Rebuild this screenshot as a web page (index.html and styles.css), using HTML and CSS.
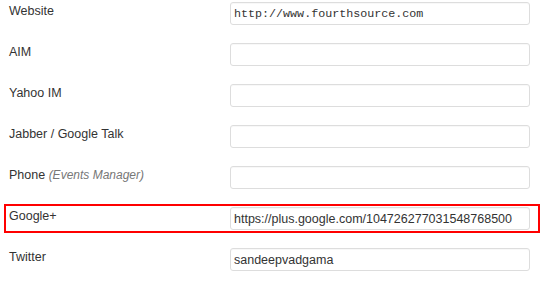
FILE: index.html
```html
<!DOCTYPE html>
<html>
<head>
<meta charset="utf-8">
<link rel="stylesheet" href="styles.css">
</head>
<body>
<div class="form">
  <div class="row">
    <div class="label">Website</div>
    <div class="field"><input class="input mono" type="text" value="http://www.fourthsource.com" readonly></div>
  </div>
  <div class="row">
    <div class="label">AIM</div>
    <div class="field"><input class="input" type="text" value="" readonly></div>
  </div>
  <div class="row">
    <div class="label">Yahoo IM</div>
    <div class="field"><input class="input" type="text" value="" readonly></div>
  </div>
  <div class="row">
    <div class="label">Jabber / Google Talk</div>
    <div class="field"><input class="input" type="text" value="" readonly></div>
  </div>
  <div class="row">
    <div class="label">Phone <em class="note">(Events Manager)</em></div>
    <div class="field"><input class="input" type="text" value="" readonly></div>
  </div>
  <div class="row highlight">
    <div class="label">Google+</div>
    <div class="field"><input class="input" type="text" value="https://plus.google.com/104726277031548768500" readonly></div>
  </div>
  <div class="row">
    <div class="label">Twitter</div>
    <div class="field"><input class="input" type="text" value="sandeepvadgama" readonly></div>
  </div>
</div>
</body>
</html>
```
FILE: styles.css
```css
html, body {
  margin: 0;
  padding: 0;
  background: #ffffff;
}
body {
  font-family: "Liberation Sans", Arial, sans-serif;
  font-size: 12.5px;
  color: #333333;
  width: 550px;
  height: 283px;
  overflow: hidden;
}
.form {
  display: flex;
  flex-direction: column;
}
.row {
  display: grid;
  grid-template-columns: 230px 300px;
  height: 41px;
  position: relative;
}
.label {
  padding-left: 9px;
  padding-top: 4px;
  line-height: 15px;
}
.note {
  color: #777777;
  font-style: italic;
  font-size: 12px;
}
.field {
  padding-top: 2px;
}
.input {
  display: block;
  box-sizing: border-box;
  width: 300px;
  height: 23px;
  margin: 0;
  padding: 0 3px;
  border: 1px solid #dddddd;
  border-radius: 3px;
  background: #ffffff;
  font-family: "Liberation Sans", Arial, sans-serif;
  font-size: 12.5px;
  color: #333333;
  outline: none;
  box-shadow: inset 0 1px 1px rgba(0,0,0,0.03);
}
.input.mono {
  font-family: "Liberation Mono", "Courier New", monospace;
  font-size: 11.7px;
}
.highlight::after {
  content: "";
  position: absolute;
  left: 4px;
  top: -1px;
  width: 536px;
  height: 29px;
  box-sizing: border-box;
  border: 2px solid #ff0000;
  pointer-events: none;
}
```
